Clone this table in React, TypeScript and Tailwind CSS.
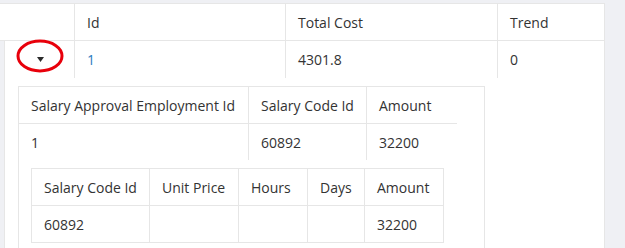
const ITEM_COLS = ["Salary Code Id", "Unit Price", "Hours", "Days", "Amount"];

function Caret() {
  return (
    <svg width="7" height="5" viewBox="0 0 7 5" aria-hidden="true">
      <path d="M0 0h7L3.5 5z" fill="#2b2b2b" />
    </svg>
  );
}

export default function App() {
  return (
    <div
      className="h-[248px] w-[625px] overflow-hidden bg-[#eff0f4] pt-[3px] text-[14px] text-[#333]"
      style={{ fontFamily: '"Open Sans", "Liberation Sans", sans-serif' }}
    >
      <div className="h-[260px] w-[605px] border-t border-r border-[#e6e6e6] bg-white">
        {/* master grid header */}
        <div className="flex h-[37px] items-center border-b border-[#e6e6e6]">
          <div className="h-full w-[75px] border-r border-[#e6e6e6]" />
          <div className="flex h-full w-[211px] items-center border-r border-[#e6e6e6] px-3">Id</div>
          <div className="flex h-full w-[212px] items-center border-r border-[#e6e6e6] px-3">Total Cost</div>
          <div className="flex h-full flex-1 items-center px-3">Trend</div>
        </div>

        <div className="flex h-full">
          <div className="h-full w-[5px] border-r border-[#e6e6e6] bg-[#eff0f4]" />
          <div className="flex-1">
            {/* master row */}
            <div className="flex h-[37px]">
              <div className="relative flex h-full w-[70px] items-center border-r border-[#e6e6e6] pl-[32px]">
                <Caret />
                <svg
                  className="absolute top-[-2px] left-[11px]"
                  width="48"
                  height="34"
                  viewBox="0 0 48 34"
                  aria-hidden="true"
                >
                  <ellipse cx="24" cy="17" rx="22" ry="15" fill="none" stroke="#e8000b" strokeWidth="3" />
                </svg>
              </div>
              <div className="flex h-full w-[211px] items-center border-r border-[#e6e6e6] px-3 text-[#2b7bbf]">1</div>
              <div className="flex h-full w-[212px] items-center border-r border-[#e6e6e6] px-3">4301.8</div>
              <div className="flex h-full flex-1 items-center px-3">0</div>
            </div>

            {/* detail panel */}
            <div className="pt-[8px] pl-[13px]">
              <div className="h-[200px] w-[467px] border-t border-r border-l border-[#e6e6e6]">
                <div className="flex h-[37px] w-[438px] border-b border-[#e6e6e6]">
                  <div className="flex h-full w-[230px] items-center border-r border-[#e6e6e6] px-3">
                    Salary Approval Employment Id
                  </div>
                  <div className="flex h-full w-[118px] items-center border-r border-[#e6e6e6] px-3">Salary Code Id</div>
                  <div className="flex h-full w-[90px] items-center px-3">Amount</div>
                </div>
                <div className="flex h-[36px] w-[438px]">
                  <div className="flex h-full w-[230px] items-center border-r border-[#e6e6e6] px-3">1</div>
                  <div className="flex h-full w-[118px] items-center border-r border-[#e6e6e6] px-3">60892</div>
                  <div className="flex h-full w-[90px] items-center px-3">32200</div>
                </div>

                {/* salary items */}
                <div className="mt-[8px] ml-[12px] w-[413px] border border-[#e6e6e6]">
                  <div className="flex h-[37px] border-b border-[#e6e6e6]">
                    {ITEM_COLS.map((c, i) => (
                      <div
                        key={c}
                        className={
                          "flex h-full items-center px-3 " +
                          ["w-[118px] border-r border-[#e6e6e6]", "w-[89px] border-r border-[#e6e6e6]", "w-[69px] border-r border-[#e6e6e6]", "w-[57px] border-r border-[#e6e6e6]", "flex-1"][i]
                        }
                      >
                        {c}
                      </div>
                    ))}
                  </div>
                  <div className="flex h-[36px]">
                    <div className="flex h-full w-[118px] items-center border-r border-[#e6e6e6] px-3">60892</div>
                    <div className="h-full w-[89px] border-r border-[#e6e6e6]" />
                    <div className="h-full w-[69px] border-r border-[#e6e6e6]" />
                    <div className="h-full w-[57px] border-r border-[#e6e6e6]" />
                    <div className="flex h-full flex-1 items-center px-3">32200</div>
                  </div>
                </div>
              </div>
            </div>
          </div>
        </div>
      </div>
    </div>
  );
}
